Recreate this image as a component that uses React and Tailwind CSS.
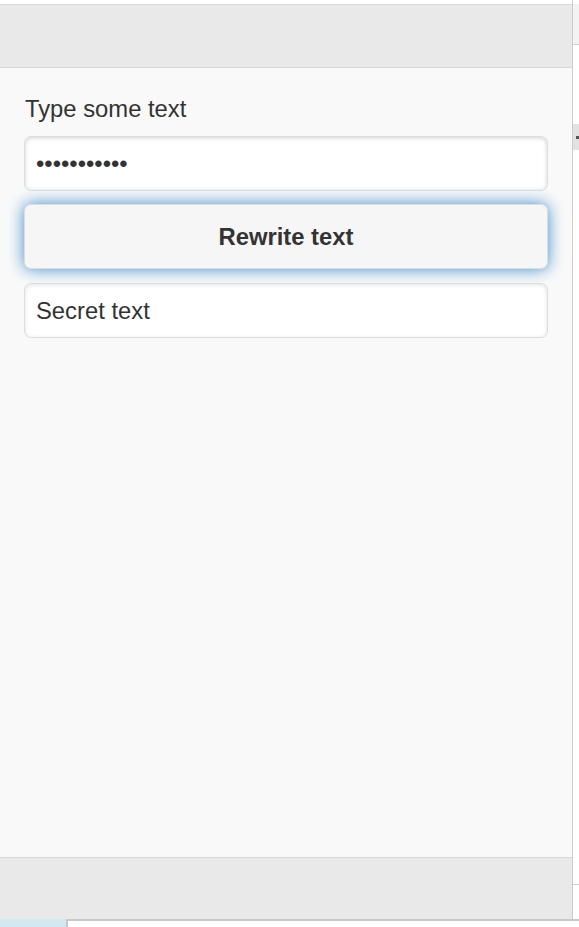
import React, { useState } from "react";

const font = { fontFamily: '"Liberation Sans", Arial, Helvetica, sans-serif' };

function SideStrip() {
  return (
    <div className="w-[6px] flex flex-col bg-white">
      <div className="h-[4px] bg-white" />
      <div className="h-[41px] bg-[#f3f3f3] border-b border-[#cfcfcf]" />
      <div className="h-[79px]" />
      <div className="h-[26px] bg-[#e2e2e2] flex items-center justify-end">
        <div className="w-[3px] h-[3px] bg-[#555]" />
      </div>
      <div className="h-[734px]" />
      <div className="h-[1px] bg-[#d0d0d0]" />
    </div>
  );
}

export default function App() {
  const [secret, setSecret] = useState("Secret text");
  const [value, setValue] = useState("secretvalue");

  return (
    <div className="w-[579px] h-[927px] flex flex-col bg-white overflow-hidden text-[#333]" style={font}>
      <div className="flex flex-1 min-h-0">
        <div className="w-[573px] flex flex-col border-r border-[#cccccc]">
          <div className="h-[4px] bg-white" />
          {/* Header */}
          <div className="h-[64px] bg-[#e9e9e9] border-y border-[#d8d8d8]" />

          {/* Content */}
          <div className="flex-1 bg-[#f9f9f9] px-[24px] pt-[26px] flex flex-col">
            <label className="text-[23.8px] leading-[30px] pl-[1px]">Type some text</label>
            <input
              type="password"
              value={value}
              onChange={(e) => setValue(e.target.value)}
              className="mt-[12px] h-[55px] w-full bg-white border border-[#dddddd] rounded-[7px] px-[11px] text-[23.8px] text-[#333] outline-none shadow-[inset_0_1px_4px_rgba(0,0,0,0.18)]"
            />
            <button
              onClick={() => setSecret(value)}
              className="mt-[13px] h-[65px] w-full bg-[#f6f6f6] border border-[#dddddd] rounded-[7px] text-[23.8px] font-bold text-[#333] shadow-[0_0_16px_rgba(51,136,204,0.95)]"
            >
              Rewrite text
            </button>
            <input
              type="text"
              value={secret}
              onChange={(e) => setSecret(e.target.value)}
              className="mt-[14px] h-[55px] w-full bg-white border border-[#dddddd] rounded-[7px] px-[11px] text-[23.8px] text-[#333] outline-none shadow-[inset_0_1px_4px_rgba(0,0,0,0.12)]"
            />
          </div>

          {/* Footer */}
          <div className="h-[62px] bg-[#e9e9e9] border-t border-[#d8d8d8]" />
        </div>
        <SideStrip />
      </div>
      <div className="h-[8px] flex">
        <div className="w-[66px] bg-[#d3e8f0]" />
        <div className="flex-1 bg-white border-t-[2px] border-l-[2px] border-[#c8c8c8]" />
      </div>
    </div>
  );
}
